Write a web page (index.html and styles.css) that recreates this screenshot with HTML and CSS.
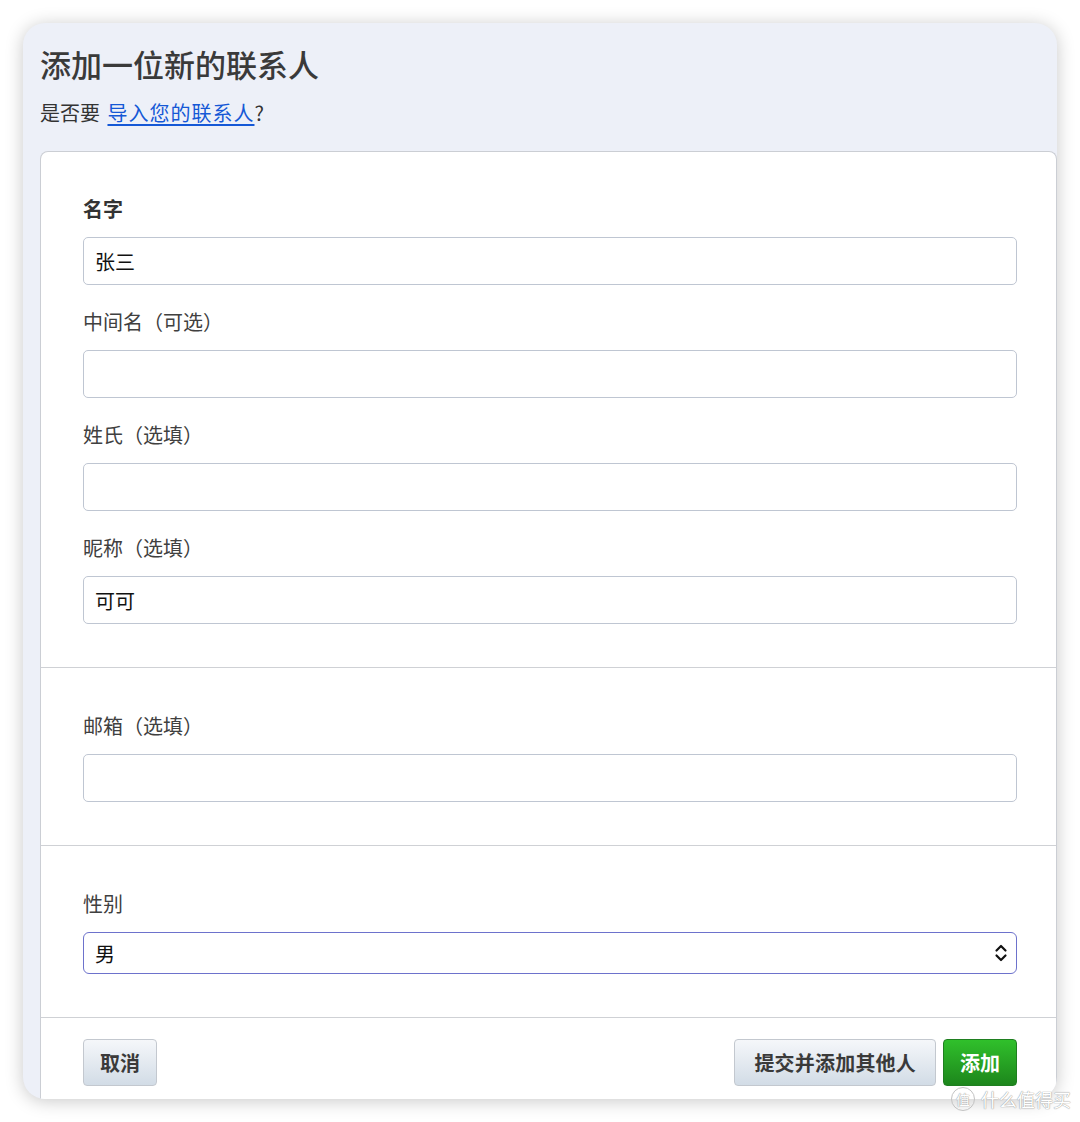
FILE: index.html
```html
<!DOCTYPE html>
<html>
  <head>
    <meta charset="UTF-8">
    <title>添加一位新的联系人</title>
    <link rel="stylesheet" href="styles.css">
  </head>
  <body>
    <div class="window">
      <!-- 头部 -->
      <div class="header">
        <div class="title">添加一位新的联系人</div>
        <div class="subtitle">是否要 <a href="#" class="link">导入您的联系人</a>?</div>
      </div>
      <!-- 表单面板 -->
      <form class="panel">
        <div class="section">
          <div class="field">
            <label class="label label-strong">名字</label>
            <input type="text" class="input" value="张三">
          </div>
          <div class="field">
            <label class="label">中间名（可选）</label>
            <input type="text" class="input">
          </div>
          <div class="field">
            <label class="label">姓氏（选填）</label>
            <input type="text" class="input">
          </div>
          <div class="field">
            <label class="label">昵称（选填）</label>
            <input type="text" class="input" value="可可">
          </div>
        </div>
        <div class="section">
          <div class="field">
            <label class="label">邮箱（选填）</label>
            <input type="text" class="input">
          </div>
        </div>
        <div class="section">
          <div class="field">
            <label class="label label-select">性别</label>
            <div class="select-wrap">
              <select class="select">
                <option>男</option>
                <option>女</option>
              </select>
              <svg class="select-arrow" width="14" height="20" viewBox="0 0 14 20">
                <path d="M2.5 7.5 L7 3 L11.5 7.5" fill="none" stroke="#111" stroke-width="2.2" stroke-linecap="round" stroke-linejoin="round"/>
                <path d="M2.5 12.5 L7 17 L11.5 12.5" fill="none" stroke="#111" stroke-width="2.2" stroke-linecap="round" stroke-linejoin="round"/>
              </svg>
            </div>
          </div>
        </div>
        <div class="footer">
          <button type="button" class="btn">取消</button>
          <div class="btn-group">
            <button type="button" class="btn btn-wide">提交并添加其他人</button>
            <button type="submit" class="btn btn-primary">添加</button>
          </div>
        </div>
      </form>
    </div>
    <!-- 水印 -->
    <div class="watermark"><span class="wm-badge">值</span>什么值得买</div>
  </body>
</html>
```

FILE: styles.css
```css
/* 基本重置 */
html,body{margin:0;padding:0;background:#fff;font-family:'Noto Sans CJK SC','Liberation Sans',sans-serif;color:#333;}
body{padding:23px;box-sizing:border-box;height:1122px;position:relative;overflow:hidden;}

/* 窗口 */
.window{width:1034px;height:1076px;border-radius:22px;overflow:hidden;background:#edf0f8;box-shadow:0 2px 18px rgba(0,0,0,0.22);display:flex;flex-direction:column;}

/* 头部 */
.header{padding:20px 17px 24px;}
.title{font-size:31px;line-height:42px;font-weight:500;color:#3a3a3a;}
.subtitle{margin-top:14px;font-size:20px;line-height:28px;color:#333;}
.link{color:#1558d6;text-decoration:underline;text-underline-offset:3px;margin-left:3px;letter-spacing:1px;}

/* 面板 */
.panel{margin:0 0 0 17px;flex:1;background:#fff;border:1px solid #cbced4;border-bottom:none;border-radius:8px 8px 0 0;}
.section{padding:43px 39px 43px 42px;border-bottom:1px solid #cfd1d5;display:flex;flex-direction:column;gap:23px;}
.section + .section{padding-top:44px;}
.field{display:flex;flex-direction:column;}
.label{font-size:20px;line-height:28px;color:#404040;margin-bottom:14px;}
.label-strong{font-weight:700;color:#333;}
.input{height:48px;box-sizing:border-box;border:1px solid #bfc6d2;border-radius:5px;padding:0 11px;font-family:inherit;font-size:20px;color:#111;background:#fff;outline:none;}

/* 下拉框 */
.select-wrap{position:relative;}
.select{width:100%;height:42px;box-sizing:border-box;border:1px solid #6d72cc;border-radius:6px;padding:0 11px;font-family:inherit;font-size:20px;color:#111;background:#fff;appearance:none;-webkit-appearance:none;outline:none;}
.select-arrow{position:absolute;right:9px;top:11px;pointer-events:none;}

/* 底部按钮 */
.footer{display:flex;justify-content:space-between;align-items:flex-start;padding:21px 39px 0 42px;}
.btn-group{display:flex;gap:7px;}
.btn{height:47px;padding:0 16px;font-family:inherit;font-size:20px;font-weight:700;color:#3a3a3a;border:1px solid #c3c8cf;border-radius:4px;background:linear-gradient(#f5f7fa,#d2dce6);cursor:pointer;}
.btn-wide{padding:0 19px;letter-spacing:0.2px;}
.btn-primary{color:#fff;border-color:#1f7f20;background:linear-gradient(#30c02b,#1d861c);}

/* 水印 */
.watermark{position:absolute;left:951px;top:1086px;display:flex;align-items:center;gap:6px;font-size:18px;line-height:26px;color:#fff;text-shadow:0 0 1px #999,0 0 1px #999;}
.wm-badge{width:22px;height:22px;border:1.5px solid #c2c2c2;border-radius:50%;display:flex;align-items:center;justify-content:center;font-size:14px;line-height:22px;}
```
